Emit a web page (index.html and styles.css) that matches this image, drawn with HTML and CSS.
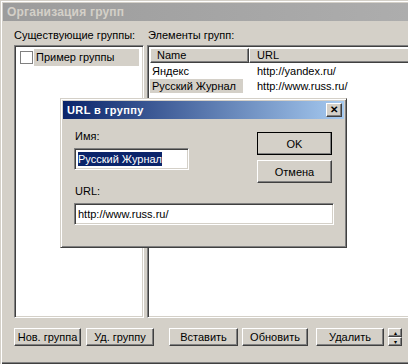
FILE: index.html
```html
<!DOCTYPE html>
<html lang="ru">
<head>
  <meta charset="UTF-8">
  <title>Организация групп</title>
  <link rel="stylesheet" href="styles.css">
</head>
<body>
  <div class="window">
    <div class="titlebar">Организация групп</div>

    <div class="panes">
      <div class="pane pane-left">
        <div class="label">Существующие группы:</div>
        <div class="field groups">
          <div class="group-item">
            <span class="check"></span>
            <span class="group-name">Пример группы</span>
          </div>
        </div>
      </div>

      <div class="pane pane-right">
        <div class="label">Элементы групп:</div>
        <div class="field items">
          <div class="header">
            <div class="col col-name">Name</div>
            <div class="col col-url">URL</div>
          </div>
          <div class="row">
            <div class="cell-name">Яндекс</div>
            <div class="cell-url">http://yandex.ru/</div>
          </div>
          <div class="row">
            <div class="cell-name"><span class="selected">Русский Журнал</span></div>
            <div class="cell-url">http://www.russ.ru/</div>
          </div>
        </div>
      </div>
    </div>

    <div class="toolbar">
      <button class="btn btn-new">Нов. группа</button>
      <button class="btn btn-del-group">Уд. группу</button>
      <button class="btn btn-insert">Вставить</button>
      <button class="btn btn-refresh">Обновить</button>
      <button class="btn btn-delete">Удалить</button>
      <div class="spinner">
        <button class="spin-btn">&#9652;</button>
        <button class="spin-btn">&#9662;</button>
      </div>
    </div>

    <!-- modal dialog over the main window -->
    <div class="dialog">
      <div class="dialog-title">
        <span>URL в группу</span>
        <button class="close-btn">&#10005;</button>
      </div>
      <div class="dialog-body">
        <div class="dialog-fields">
          <div class="label">Имя:</div>
          <div class="field input input-name"><span class="text-selected">Русский Журнал</span></div>
          <div class="label label-url">URL:</div>
          <div class="field input input-url">http://www.russ.ru/</div>
        </div>
        <div class="dialog-buttons">
          <button class="btn btn-default">OK</button>
          <button class="btn btn-dialog">Отмена</button>
        </div>
      </div>
    </div>
  </div>
</body>
</html>
```

FILE: styles.css
```css
* {
  margin: 0;
  padding: 0;
  box-sizing: border-box;
}

body {
  width: 408px;
  height: 364px;
  overflow: hidden;
  background: #ffffff;
  font-family: 'Liberation Sans', Arial, sans-serif;
  font-size: 11px;
  color: #000;
}

.window {
  position: relative;
  width: 420px;
  height: 364px;
  background: #d4d0c8;
  border-top: 1px solid #d4d0c8;
  border-left: 1px solid #d4d0c8;
  box-shadow: inset 1px 1px #ffffff, inset 0 -1px #404040, inset 0 -2px #808080;
  padding: 2px 0 0 2px;
}

.titlebar {
  height: 18px;
  margin-right: 12px;
  padding-left: 4px;
  background: linear-gradient(to right, #9c9c9c, #adadad);
  color: #d4d0c8;
  font-weight: bold;
  font-size: 12px;
  line-height: 18px;
  letter-spacing: 0.2px;
}

.panes {
  display: flex;
  gap: 3px;
  padding: 8px 0 0 11px;
}

.label {
  height: 13px;
  line-height: 13px;
  margin-bottom: 3px;
  white-space: nowrap;
}

.pane-left {
  width: 130px;
}

.pane-right {
  flex: 1;
}

.pane-right .label {
  padding-left: 1px;
}

/* sunken 3D edge */
.field {
  background: #ffffff;
  border: 1px solid;
  border-color: #808080 #ffffff #ffffff #808080;
  box-shadow: inset 1px 1px #404040, inset -1px -1px #d4d0c8;
}

.groups,
.items {
  height: 273px;
}

.groups {
  padding: 3px 0 0 4px;
}

.group-item {
  display: flex;
  align-items: center;
  height: 17px;
}

.check {
  width: 13px;
  height: 13px;
  border: 1px solid #808080;
  background: #fff;
  margin: 0 1px 0 1px;
}

.group-name {
  flex: 1;
  height: 17px;
  line-height: 17px;
  padding-left: 2px;
  margin-right: 4px;
  background: #d4d0c8;
  white-space: nowrap;
}

.items {
  padding: 2px 0 0 2px;
  border-right: none;
}

.header {
  display: flex;
  height: 15px;
  margin-bottom: 1px;
}

.col {
  height: 15px;
  line-height: 13px;
  background: #d4d0c8;
  border: 1px solid;
  border-color: #ffffff #404040 #404040 #ffffff;
  box-shadow: inset -1px -1px #808080;
  padding-left: 6px;
}

.col-name {
  width: 99px;
}

.col-url {
  flex: 1;
  padding-left: 7px;
}

.row {
  display: flex;
  height: 15px;
  line-height: 14px;
  white-space: nowrap;
}

.cell-name {
  width: 99px;
  padding-left: 2px;
}

.cell-name .selected {
  display: inline-block;
  background: #d4d0c8;
  padding: 0 2px;
  margin-left: -2px;
  width: 93px;
}

.cell-url {
  padding-left: 8px;
}

.toolbar {
  display: flex;
  align-items: flex-start;
  padding: 10px 0 0 11px;
}

.btn {
  height: 18px;
  background: #d4d0c8;
  border: 1px solid;
  border-color: #ffffff #404040 #404040 #ffffff;
  box-shadow: inset -1px -1px #808080;
  font-family: inherit;
  font-size: 11px;
  color: #000;
  text-align: center;
  white-space: nowrap;
}

.btn-new { width: 67px; }
.btn-del-group { width: 68px; margin-left: 5px; }
.btn-insert { width: 69px; margin-left: 15px; }
.btn-refresh { width: 66px; margin-left: 4px; }
.btn-delete { width: 68px; margin-left: 8px; }

.spinner {
  display: flex;
  flex-direction: column;
  margin-left: 4px;
}

.spin-btn {
  width: 14px;
  height: 9px;
  background: #d4d0c8;
  border: 1px solid;
  border-color: #ffffff #404040 #404040 #ffffff;
  box-shadow: inset -1px -1px #808080;
  font-size: 6px;
  line-height: 6px;
  color: #000;
}

/* dialog */
.dialog {
  position: absolute;
  left: 59px;
  top: 97px;
  width: 287px;
  height: 150px;
  background: #d4d0c8;
  border: 1px solid;
  border-color: #d4d0c8 #404040 #404040 #d4d0c8;
  box-shadow: inset 1px 1px #ffffff, inset -1px -1px #808080;
  padding: 2px;
}

.dialog-title {
  display: flex;
  justify-content: space-between;
  align-items: center;
  height: 18px;
  padding: 0 2px 0 4px;
  background: linear-gradient(to right, #0a246a, #a6caf0);
  color: #fff;
  font-weight: bold;
  font-size: 11px;
  letter-spacing: 0.4px;
}

.close-btn {
  width: 16px;
  height: 14px;
  background: #d4d0c8;
  border: 1px solid;
  border-color: #ffffff #404040 #404040 #ffffff;
  box-shadow: inset -1px -1px #808080;
  font-size: 10px;
  font-weight: bold;
  line-height: 10px;
  color: #000;
}

.dialog-body {
  display: flex;
  padding: 11px 0 0 11px;
}

.dialog-fields {
  width: 260px;
}

.dialog-fields .label {
  padding-left: 1px;
  margin-bottom: 5px;
}

.label-url {
  margin-top: 15px;
}

.input {
  height: 22px;
  padding: 3px 0 0 3px;
  line-height: 14px;
  white-space: nowrap;
}

.input-name {
  width: 115px;
}

.text-selected {
  display: inline-block;
  background: #0a246a;
  color: #fff;
  height: 14px;
}

.dialog-buttons {
  display: flex;
  flex-direction: column;
  gap: 5px;
  margin-left: -77px;
  padding-top: 2px;
}

.dialog-buttons .btn {
  width: 75px;
  height: 23px;
}

.btn-default {
  outline: 1px solid #000;
  outline-offset: -1px;
}
```
